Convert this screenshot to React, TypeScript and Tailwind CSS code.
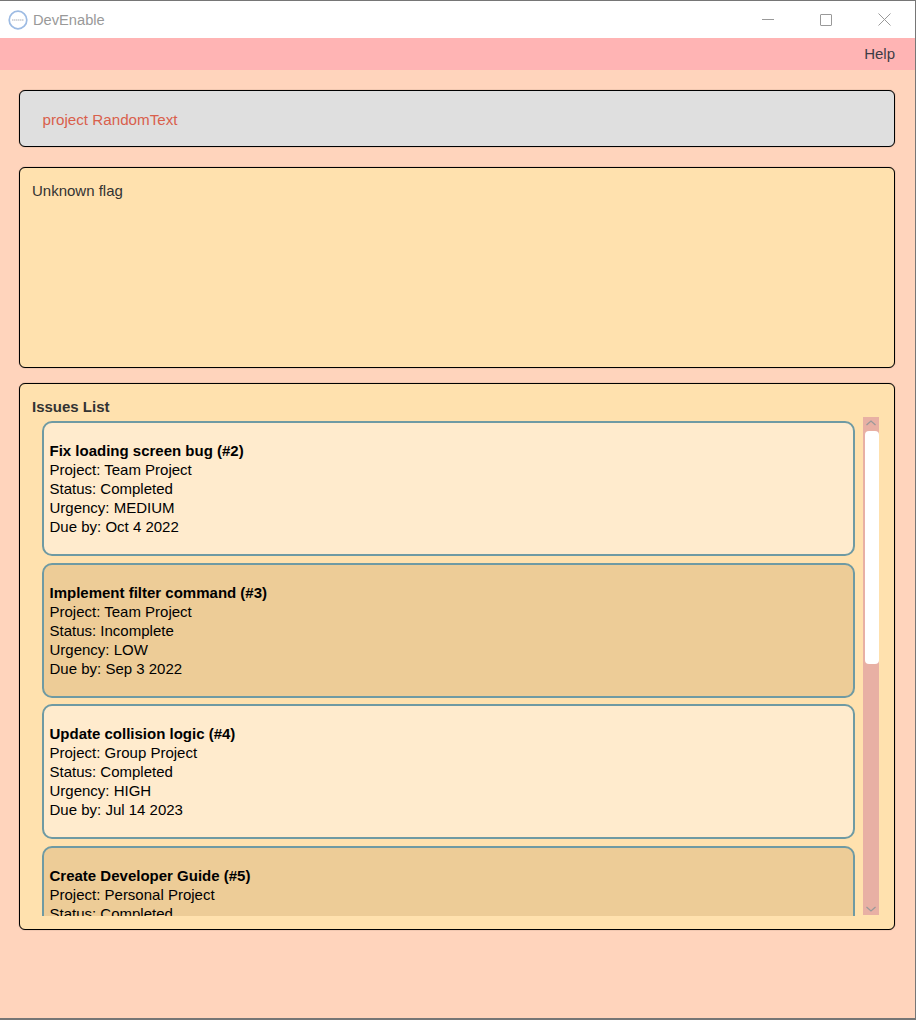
type Issue = {
  title: string;
  project: string;
  status: string;
  urgency: string;
  due: string;
};

const issues: Issue[] = [
  { title: 'Fix loading screen bug (#2)', project: 'Team Project', status: 'Completed', urgency: 'MEDIUM', due: 'Oct 4 2022' },
  { title: 'Implement filter command (#3)', project: 'Team Project', status: 'Incomplete', urgency: 'LOW', due: 'Sep 3 2022' },
  { title: 'Update collision logic (#4)', project: 'Group Project', status: 'Completed', urgency: 'HIGH', due: 'Jul 14 2023' },
  { title: 'Create Developer Guide (#5)', project: 'Personal Project', status: 'Completed', urgency: 'LOW', due: 'Nov 1 2022' },
];

function IssueCard({ issue, odd }: { issue: Issue; odd: boolean }) {
  return (
    <div
      className={`h-[135px] shrink-0 rounded-[10px] border-2 border-[#6f9aa3] pl-[5.5px] pt-[18px] text-[15px] leading-[19px] text-black ${
        odd ? 'bg-[#edcc97]' : 'bg-[#ffebcd]'
      }`}
    >
      <div className="font-bold">{issue.title}</div>
      <div>Project: {issue.project}</div>
      <div>Status: {issue.status}</div>
      <div>Urgency: {issue.urgency}</div>
      <div>Due by: {issue.due}</div>
    </div>
  );
}

export default function App() {
  return (
    <div className="flex h-[1020px] w-[916px] flex-col overflow-hidden border-b-2 border-r border-t border-[#767676] bg-[#ffd4bc] font-['Liberation_Sans',Arial,sans-serif]">
      <div className="flex h-[37px] shrink-0 items-center bg-white">
        <svg width="20" height="20" viewBox="0 0 20 20" className="ml-[8px]">
          <circle cx="10" cy="10" r="8.8" fill="none" stroke="#9dbbe3" strokeWidth="1.7" />
          <line x1="4" y1="10" x2="16" y2="10" stroke="#a9adb5" strokeWidth="1" strokeDasharray="1.5 0.5" />
        </svg>
        <span className="ml-[5px] text-[14.67px] text-[#999999]">DevEnable</span>
        <div className="ml-auto flex items-center pr-[24px]">
          <div className="h-px w-[12px] bg-[#999999]" />
          <div className="ml-[46px] h-[12px] w-[12px] rounded-[1px] border border-[#999999]" />
          <svg width="13" height="13" viewBox="0 0 13 13" className="ml-[46px]">
            <path d="M0.5 0.5 12.5 12.5 M12.5 0.5 0.5 12.5" stroke="#999999" strokeWidth="1" fill="none" />
          </svg>
        </div>
      </div>

      <div className="flex h-[32px] shrink-0 items-center justify-end bg-[#ffb4b4] pr-[20px] text-[15px] text-[#3c3c46]">
        Help
      </div>

      <div className="flex flex-col pl-[19px] pr-[20px] pt-[20px]">
        <div className="flex h-[57px] items-center rounded-[6px] border border-black bg-[#dfdfdf] pl-[22.5px] pt-[4px] text-[15.2px] text-[#d9604c] shadow-[0_0_1px_rgba(0,0,0,0.6)]">
          project RandomText
        </div>

        <div className="mt-[20px] h-[201px] rounded-[6px] border border-black bg-[#ffe1ae] pl-[12px] pt-[14px] text-[15px] leading-[17px] text-[#333333] shadow-[0_0_1px_rgba(0,0,0,0.6)]">
          Unknown flag
        </div>

        <div className="mt-[15px] flex h-[547px] flex-col rounded-[6px] border border-black bg-[#ffe1ae] pl-[12px] pt-[14px] shadow-[0_0_1px_rgba(0,0,0,0.6)]">
          <div className="h-[19px] text-[15px] font-bold leading-[17px] text-[#333333]">Issues List</div>
          <div className="flex h-[499px]">
            <div className="ml-[10px] flex h-[499px] w-[813px] flex-col gap-[6.5px] overflow-hidden pt-[4px]">
              {issues.map((issue, i) => (
                <IssueCard key={issue.title} issue={issue} odd={i % 2 === 1} />
              ))}
            </div>
            <div className="relative ml-[8px] h-[498px] w-[16px] bg-[#e8b0a4]">
              <svg width="12" height="8" viewBox="0 0 12 8" className="absolute left-[2px] top-[2px]">
                <path d="M1.5 6 6 2 10.5 6" fill="none" stroke="#999999" strokeWidth="1.2" />
              </svg>
              <div className="absolute left-[2px] top-[14px] h-[233px] w-[14px] rounded-[4px] bg-white" />
              <svg width="12" height="8" viewBox="0 0 12 8" className="absolute bottom-[2px] left-[2px]">
                <path d="M1.5 2 6 6 10.5 2" fill="none" stroke="#999999" strokeWidth="1.2" />
              </svg>
            </div>
          </div>
        </div>
      </div>
    </div>
  );
}
